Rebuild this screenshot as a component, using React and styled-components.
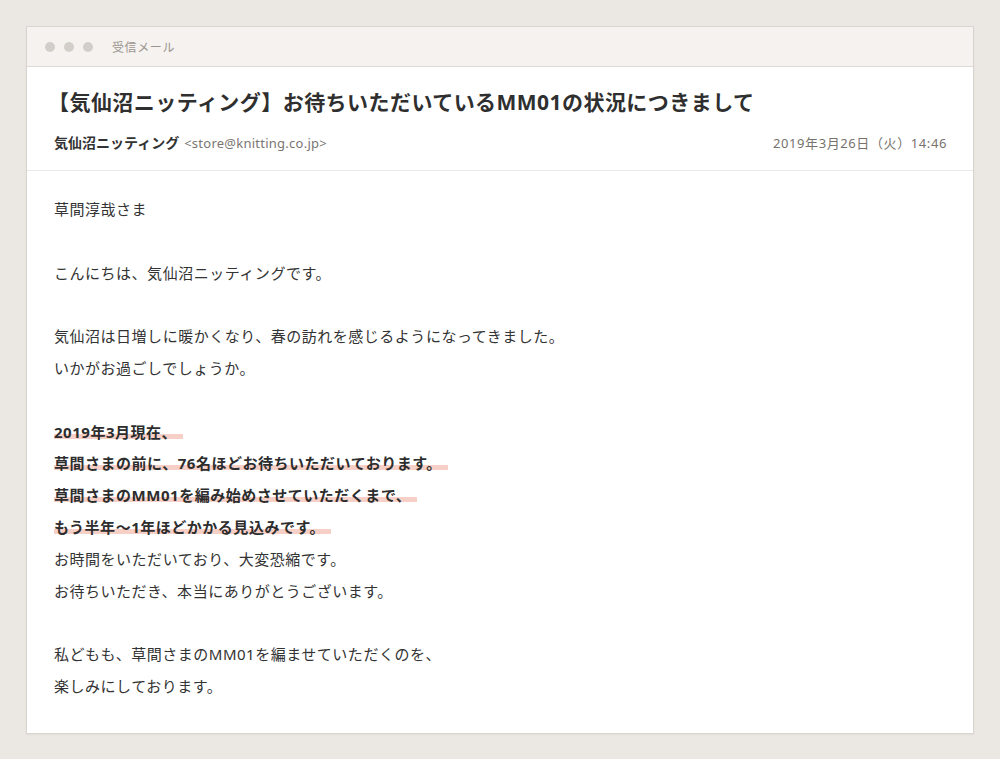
import React from "react";
import styled, { createGlobalStyle } from "styled-components";

const Global = createGlobalStyle`
  html, body { margin: 0; padding: 0; }
  body {
    background: #ebe7e3;
    font-family: "Noto Sans", "Noto Sans CJK JP", sans-serif;
    color: #333;
  }
`;

const Page = styled.div`
  padding: 26px;
`;

const Window = styled.div`
  background: #fff;
  border: 1px solid #d9d4cf;
  box-shadow: 0 1px 2px rgba(0, 0, 0, 0.04);
`;

const TitleBar = styled.div`
  height: 39px;
  background: #f5f2ef;
  border-bottom: 1px solid #dedad6;
  display: flex;
  align-items: center;
  padding-left: 18px;
`;

const Dots = styled.div`
  display: flex;
  gap: 9px;
`;

const Dot = styled.span`
  width: 10px;
  height: 10px;
  border-radius: 50%;
  background: #d3cec9;
`;

const BarLabel = styled.span`
  margin-left: 19px;
  font-size: 12px;
  letter-spacing: 0.6px;
  color: #9a9590;
`;

const Header = styled.div`
  padding: 20px 26px 17px 27px;
  border-bottom: 1px solid #ebe8e5;
`;

const Subject = styled.h1`
  margin: 0 0 0 -6px;
  font-size: 21px;
  line-height: 30px;
  letter-spacing: 0.45px;
  font-weight: 700;
  color: #2f2f2f;
`;

const MetaRow = styled.div`
  margin-top: 16px;
  display: flex;
  justify-content: space-between;
  align-items: center;
  line-height: 20px;
`;

const Sender = styled.div`
  display: flex;
  align-items: baseline;
  gap: 5px;
`;

const SenderName = styled.span`
  font-size: 14px;
  font-weight: 700;
  color: #333;
`;

const SenderMail = styled.span`
  font-size: 13px;
  letter-spacing: 0.25px;
  color: #7a7672;
`;

const DateText = styled.span`
  font-size: 13px;
  letter-spacing: 0.6px;
  color: #77726d;
`;

const Body = styled.div`
  padding: 23px 27px 30px;
  font-size: 15px;
  letter-spacing: 0.52px;
  line-height: 31.8px;
  color: #333;
`;

const Line = styled.div`
  min-height: 31.8px;
`;

const Mark = styled.span`
  font-weight: 700;
  color: #2d2d2d;
  padding-right: 6px;
  background: linear-gradient(
    transparent 58%,
    #f6cfc7 58%,
    #f6cfc7 84%,
    transparent 84%
  );
`;

const lines = [
  { t: "草間淳哉さま" },
  { t: "" },
  { t: "こんにちは、気仙沼ニッティングです。" },
  { t: "" },
  { t: "気仙沼は日増しに暖かくなり、春の訪れを感じるようになってきました。" },
  { t: "いかがお過ごしでしょうか。" },
  { t: "" },
  { t: "2019年3月現在、", m: true },
  { t: "草間さまの前に、76名ほどお待ちいただいております。", m: true },
  { t: "草間さまのMM01を編み始めさせていただくまで、", m: true },
  { t: "もう半年〜1年ほどかかる見込みです。", m: true },
  { t: "お時間をいただいており、大変恐縮です。" },
  { t: "お待ちいただき、本当にありがとうございます。" },
  { t: "" },
  { t: "私どもも、草間さまのMM01を編ませていただくのを、" },
  { t: "楽しみにしております。" },
];

export default function App() {
  return (
    <>
      <Global />
      <Page>
        <Window>
          <TitleBar>
            <Dots>
              <Dot />
              <Dot />
              <Dot />
            </Dots>
            <BarLabel>受信メール</BarLabel>
          </TitleBar>
          <Header>
            <Subject>【気仙沼ニッティング】お待ちいただいているMM01の状況につきまして</Subject>
            <MetaRow>
              <Sender>
                <SenderName>気仙沼ニッティング</SenderName>
                <SenderMail>&lt;store@knitting.co.jp&gt;</SenderMail>
              </Sender>
              <DateText>2019年3月26日（火）14:46</DateText>
            </MetaRow>
          </Header>
          <Body>
            {lines.map((l, i) => (
              <Line key={i}>{l.m ? <Mark>{l.t}</Mark> : l.t}</Line>
            ))}
          </Body>
        </Window>
      </Page>
    </>
  );
}
